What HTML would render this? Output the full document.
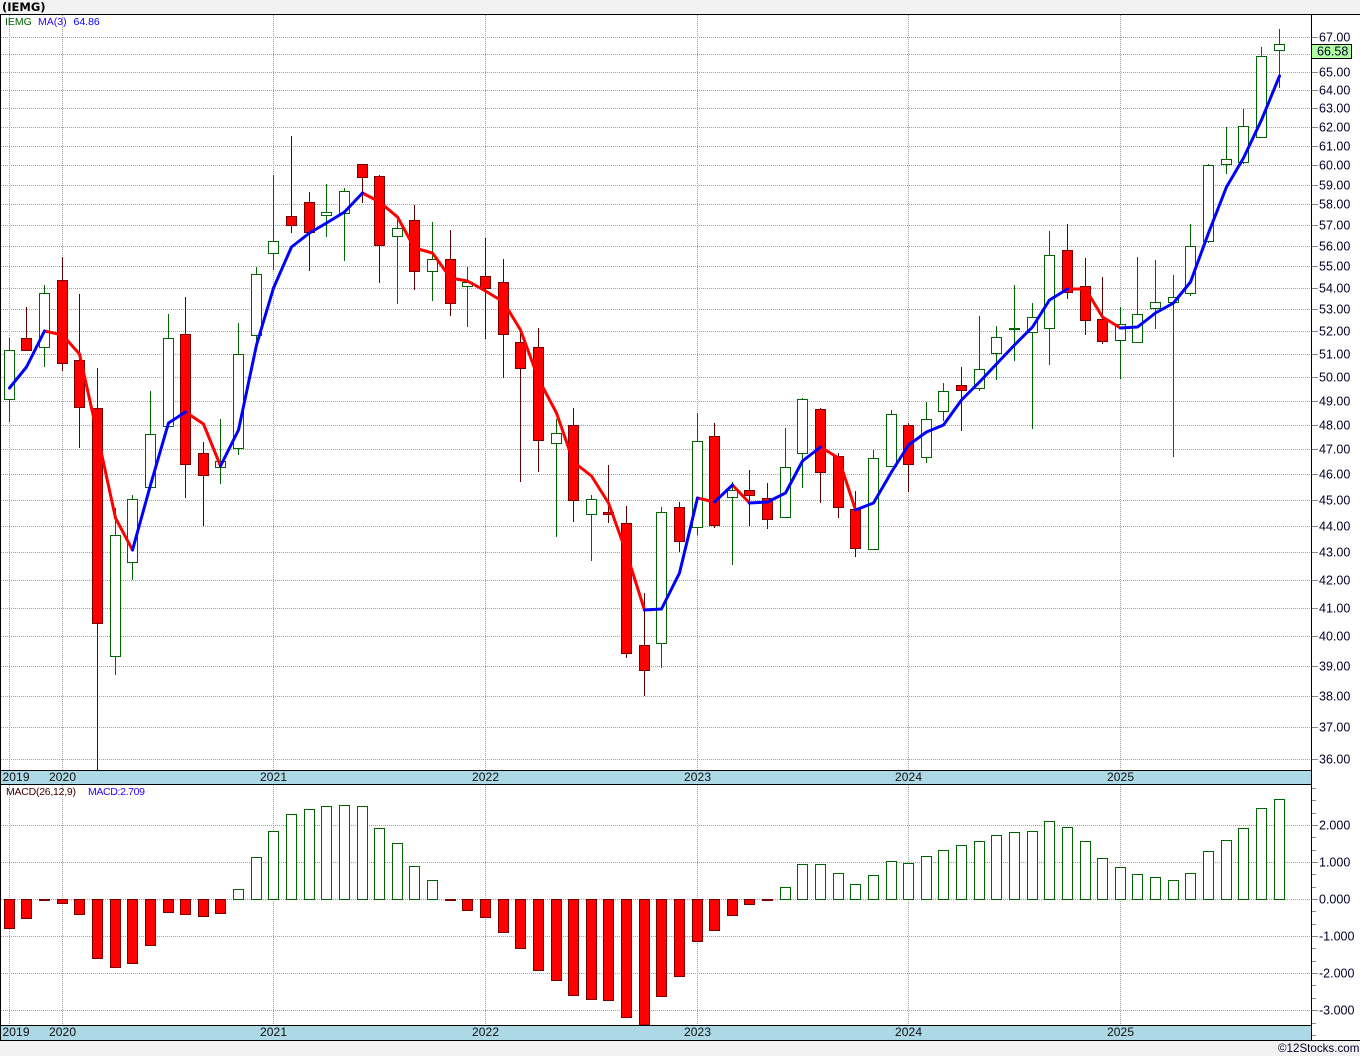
<!DOCTYPE html>
<html><head><meta charset="utf-8"><title>IEMG</title>
<style>html,body{margin:0;padding:0;background:#f2f2f2;width:1360px;height:1056px;overflow:hidden}svg{display:block}text{font-family:"Liberation Sans",sans-serif}</style></head>
<body>
<svg width="1360" height="1056" viewBox="0 0 1360 1056" xmlns="http://www.w3.org/2000/svg">
<rect width="1360" height="1056" fill="#f2f2f2"/>
<rect x="0" y="14" width="1360" height="1027" fill="#fff"/>
<text x="2" y="11" font-size="11.5" font-weight="bold" fill="#000" style="font-family:'DejaVu Sans',sans-serif">(IEMG)</text>
<g shape-rendering="crispEdges">
<path fill="none" stroke="#a0a0a0" stroke-dasharray="1 1" d="M9.5 15V770M62.5 15V770M273.5 15V770M485.5 15V770M697.5 15V770M908.5 15V770M1120.5 15V770M9.5 785V1025M62.5 785V1025M273.5 785V1025M485.5 785V1025M697.5 785V1025M908.5 785V1025M1120.5 785V1025"/>
<path fill="none" stroke="#a0a0a0" stroke-dasharray="1 1" d="M1 37.5H1311M1 54.5H1311M1 72.5H1311M1 90.5H1311M1 108.5H1311M1 127.5H1311M1 146.5H1311M1 165.5H1311M1 185.5H1311M1 204.5H1311M1 225.5H1311M1 246.5H1311M1 266.5H1311M1 288.5H1311M1 309.5H1311M1 331.5H1311M1 354.5H1311M1 377.5H1311M1 401.5H1311M1 425.5H1311M1 449.5H1311M1 474.5H1311M1 500.5H1311M1 526.5H1311M1 552.5H1311M1 580.5H1311M1 608.5H1311M1 636.5H1311M1 666.5H1311M1 696.5H1311M1 727.5H1311M1 759.5H1311M1 825.5H1311M1 862.5H1311M1 899.5H1311M1 936.5H1311M1 973.5H1311M1 1010.5H1311"/>
<path fill="none" stroke="#006400" d="M9.5 338V422M44.5 285V367M115.5 508V675M132.5 495V580M150.5 391V488M168.5 314V428M220.5 419V484M238.5 323V455M256.5 267V341M273.5 175V270M326.5 184V237M344.5 188V261M397.5 220V304M432.5 222V301M467.5 267V327M556.5 419V537M591.5 495V561M661.5 507V668M697.5 413V535M732.5 482V565M785.5 428V517M802.5 398V488M873.5 450V550M891.5 410V466M926.5 402V463M943.5 383V421M979.5 316V391M996.5 326V380M1014.5 285V361M1032.5 303V429M1049.5 231V365M1120.5 307V379M1137.5 257V342M1155.5 260V329M1173.5 275V457M1190.5 224V296M1208.5 164V243M1226.5 127V174M1243.5 109V164M1261.5 47V138M1279.5 29V88"/>
<path fill="none" stroke="#5a0000" d="M26.5 307V351M62.5 257V371M79.5 294V448M97.5 368V770M185.5 297V498M203.5 442V526M291.5 136V233M309.5 192V271M362.5 164V203M379.5 175V283M414.5 205V290M450.5 230V316M485.5 238V339M503.5 259V378M520.5 330V482M538.5 328V472M573.5 408V522M608.5 465V523M626.5 506V658M644.5 593V696M679.5 502V552M714.5 423V528M749.5 470V526M767.5 483V529M820.5 408V503M838.5 453V518M855.5 491V557M908.5 423V492M961.5 367V431M1067.5 224V299M1085.5 258V335M1102.5 277V344"/>
<path fill="#fff" stroke="#006400" d="M4.5 350.5h10V399.5h-10zM39.5 293.5h10V347.5h-10zM110.5 535.5h10V656.5h-10zM127.5 499.5h10V562.5h-10zM145.5 434.5h10V487.5h-10zM163.5 338.5h10V426.5h-10zM215.5 461.5h10V467.5h-10zM233.5 354.5h10V448.5h-10zM251.5 274.5h10V335.5h-10zM268.5 241.5h10V253.5h-10zM321.5 212.5h10V215.5h-10zM339.5 191.5h10V213.5h-10zM392.5 228.5h10V236.5h-10zM427.5 259.5h10V271.5h-10zM462.5 282.5h10V286.5h-10zM551.5 433.5h10V443.5h-10zM586.5 499.5h10V514.5h-10zM656.5 512.5h10V643.5h-10zM692.5 441.5h10V527.5h-10zM727.5 490.5h10V497.5h-10zM780.5 467.5h10V517.5h-10zM797.5 399.5h10V453.5h-10zM868.5 458.5h10V549.5h-10zM886.5 414.5h10V466.5h-10zM921.5 419.5h10V457.5h-10zM938.5 391.5h10V411.5h-10zM974.5 369.5h10V388.5h-10zM991.5 337.5h10V353.5h-10zM1009.5 328.5h10V329.5h-10zM1027.5 317.5h10V332.5h-10zM1044.5 255.5h10V328.5h-10zM1115.5 324.5h10V340.5h-10zM1132.5 314.5h10V342.5h-10zM1150.5 302.5h10V308.5h-10zM1168.5 297.5h10V302.5h-10zM1185.5 246.5h10V293.5h-10zM1203.5 165.5h10V241.5h-10zM1221.5 159.5h10V164.5h-10zM1238.5 126.5h10V162.5h-10zM1256.5 56.5h10V137.5h-10zM1274.5 44.5h10V50.5h-10z"/>
<path fill="#f00" stroke="#7a0000" d="M21.5 338.5h10V350.5h-10zM57.5 280.5h10V363.5h-10zM74.5 360.5h10V407.5h-10zM92.5 408.5h10V623.5h-10zM180.5 334.5h10V464.5h-10zM198.5 453.5h10V475.5h-10zM286.5 216.5h10V225.5h-10zM304.5 202.5h10V232.5h-10zM357.5 164.5h10V177.5h-10zM374.5 176.5h10V245.5h-10zM409.5 220.5h10V271.5h-10zM445.5 259.5h10V303.5h-10zM480.5 276.5h10V288.5h-10zM498.5 282.5h10V334.5h-10zM515.5 342.5h10V368.5h-10zM533.5 347.5h10V440.5h-10zM568.5 425.5h10V500.5h-10zM603.5 512.5h10V514.5h-10zM621.5 523.5h10V653.5h-10zM639.5 645.5h10V670.5h-10zM674.5 507.5h10V541.5h-10zM709.5 436.5h10V525.5h-10zM744.5 490.5h10V495.5h-10zM762.5 498.5h10V519.5h-10zM815.5 409.5h10V472.5h-10zM833.5 456.5h10V507.5h-10zM850.5 509.5h10V548.5h-10zM903.5 425.5h10V464.5h-10zM956.5 385.5h10V390.5h-10zM1062.5 250.5h10V292.5h-10zM1080.5 286.5h10V320.5h-10zM1097.5 319.5h10V341.5h-10z"/>
<path fill="#fff" stroke="#006400" d="M268.5 831.5h10V899.5h-10zM233.5 889.5h10V899.5h-10zM251.5 857.5h10V899.5h-10zM286.5 814.5h10V899.5h-10zM304.5 809.5h10V899.5h-10zM321.5 806.5h10V899.5h-10zM339.5 805.5h10V899.5h-10zM357.5 806.5h10V899.5h-10zM374.5 828.5h10V899.5h-10zM392.5 843.5h10V899.5h-10zM409.5 866.5h10V899.5h-10zM427.5 880.5h10V899.5h-10zM780.5 887.5h10V899.5h-10zM797.5 864.5h10V899.5h-10zM815.5 864.5h10V899.5h-10zM833.5 873.5h10V899.5h-10zM850.5 884.5h10V899.5h-10zM868.5 875.5h10V899.5h-10zM886.5 861.5h10V899.5h-10zM903.5 863.5h10V899.5h-10zM921.5 856.5h10V899.5h-10zM938.5 850.5h10V899.5h-10zM956.5 845.5h10V899.5h-10zM974.5 841.5h10V899.5h-10zM991.5 835.5h10V899.5h-10zM1009.5 832.5h10V899.5h-10zM1027.5 831.5h10V899.5h-10zM1044.5 821.5h10V899.5h-10zM1062.5 827.5h10V899.5h-10zM1080.5 841.5h10V899.5h-10zM1097.5 858.5h10V899.5h-10zM1115.5 867.5h10V899.5h-10zM1132.5 874.5h10V899.5h-10zM1150.5 877.5h10V899.5h-10zM1168.5 880.5h10V899.5h-10zM1185.5 873.5h10V899.5h-10zM1203.5 851.5h10V899.5h-10zM1221.5 840.5h10V899.5h-10zM1238.5 828.5h10V899.5h-10zM1256.5 808.5h10V899.5h-10zM1274.5 799.5h10V899.5h-10z"/>
<path fill="#f00" stroke="#7a0000" d="M4.5 899.5h10V928.5h-10zM21.5 899.5h10V918.5h-10zM39.5 899.5h10V900.5h-10zM57.5 899.5h10V903.5h-10zM74.5 899.5h10V914.5h-10zM92.5 899.5h10V958.5h-10zM110.5 899.5h10V967.5h-10zM127.5 899.5h10V963.5h-10zM145.5 899.5h10V945.5h-10zM163.5 899.5h10V912.5h-10zM180.5 899.5h10V914.5h-10zM198.5 899.5h10V916.5h-10zM215.5 899.5h10V913.5h-10zM445.5 899.5h10V900.5h-10zM462.5 899.5h10V910.5h-10zM480.5 899.5h10V917.5h-10zM498.5 899.5h10V932.5h-10zM515.5 899.5h10V948.5h-10zM533.5 899.5h10V970.5h-10zM551.5 899.5h10V980.5h-10zM568.5 899.5h10V995.5h-10zM586.5 899.5h10V999.5h-10zM603.5 899.5h10V1000.5h-10zM621.5 899.5h10V1017.5h-10zM639.5 899.5h10V1025h-10zM656.5 899.5h10V996.5h-10zM674.5 899.5h10V976.5h-10zM692.5 899.5h10V941.5h-10zM709.5 899.5h10V930.5h-10zM727.5 899.5h10V915.5h-10zM744.5 899.5h10V904.5h-10zM762.5 899.5h10V900.5h-10z"/>
</g>
<g fill="none" stroke-width="3" stroke-linejoin="round" stroke-linecap="round">
<path stroke="#f00" d="M44.5 331L62.5 335L79.5 354L97.5 435L115.5 518L132.5 550M185.5 412L203.5 424L220.5 466M362.5 193L379.5 202L397.5 217L414.5 248L432.5 253L450.5 278L467.5 281L485.5 291L503.5 302L520.5 330L538.5 379L556.5 413L573.5 462L591.5 476L608.5 503L626.5 553L644.5 610M697.5 498L714.5 502M732.5 485L749.5 503M820.5 447L838.5 458L855.5 510M1067.5 289L1085.5 289L1102.5 317L1120.5 328"/>
<path stroke="#00f" d="M9.5 388L26.5 367L44.5 331M132.5 550L150.5 485L168.5 423L185.5 412M220.5 466L238.5 430L256.5 345L273.5 288L291.5 247L309.5 233L326.5 223L344.5 212L362.5 193M644.5 610L661.5 609L679.5 573L697.5 498M714.5 502L732.5 485M749.5 503L767.5 502L785.5 493L802.5 461L820.5 447M855.5 510L873.5 503L891.5 472L908.5 445L926.5 432L943.5 425L961.5 400L979.5 382L996.5 364L1014.5 345L1032.5 327L1049.5 300L1067.5 289M1120.5 328L1137.5 327L1155.5 313L1173.5 303L1190.5 282L1208.5 233L1226.5 187L1243.5 158L1261.5 120L1279.5 76"/>
</g>
<g shape-rendering="crispEdges">
<rect x="1" y="771" width="1310" height="13" fill="#add8e6"/>
<rect x="1" y="1026" width="1310" height="14" fill="#add8e6"/>
<path fill="none" stroke="#000" d="M0 14.5H1360M0 770.5H1311M0 784.5H1311M0 1025.5H1311M0 1040.5H1360M1311.5 14V1040M0.5 14V1040"/>
<path fill="none" stroke="#888" d="M1312 37.5h6M1312 72.5h6M1312 90.5h6M1312 108.5h6M1312 127.5h6M1312 146.5h6M1312 165.5h6M1312 185.5h6M1312 204.5h6M1312 225.5h6M1312 246.5h6M1312 266.5h6M1312 288.5h6M1312 309.5h6M1312 331.5h6M1312 354.5h6M1312 377.5h6M1312 401.5h6M1312 425.5h6M1312 449.5h6M1312 474.5h6M1312 500.5h6M1312 526.5h6M1312 552.5h6M1312 580.5h6M1312 608.5h6M1312 636.5h6M1312 666.5h6M1312 696.5h6M1312 727.5h6M1312 759.5h6M1312 825.5h6M1312 862.5h6M1312 899.5h6M1312 936.5h6M1312 973.5h6M1312 1010.5h6M1312 788.5h4M1312 800.5h4M1312 813.5h4M1312 837.5h4M1312 850.5h4M1312 874.5h4M1312 887.5h4M1312 911.5h4M1312 924.5h4M1312 948.5h4M1312 961.5h4M1312 985.5h4M1312 998.5h4M1312 1023.5h4M1312 1035.5h4"/>
<rect x="1311.5" y="44.5" width="40" height="14" fill="#b0ffa0" stroke="#000"/>
</g>
<g font-size="12.5" fill="#000028">
<text x="1319" y="41.5">67.00</text><text x="1317" y="55.5">66.58</text><text x="1319" y="76.5">65.00</text><text x="1319" y="94.5">64.00</text><text x="1319" y="112.5">63.00</text><text x="1319" y="131.5">62.00</text><text x="1319" y="150.5">61.00</text><text x="1319" y="169.5">60.00</text><text x="1319" y="189.5">59.00</text><text x="1319" y="208.5">58.00</text><text x="1319" y="229.5">57.00</text><text x="1319" y="250.5">56.00</text><text x="1319" y="270.5">55.00</text><text x="1319" y="292.5">54.00</text><text x="1319" y="313.5">53.00</text><text x="1319" y="335.5">52.00</text><text x="1319" y="358.5">51.00</text><text x="1319" y="381.5">50.00</text><text x="1319" y="405.5">49.00</text><text x="1319" y="429.5">48.00</text><text x="1319" y="453.5">47.00</text><text x="1319" y="478.5">46.00</text><text x="1319" y="504.5">45.00</text><text x="1319" y="530.5">44.00</text><text x="1319" y="556.5">43.00</text><text x="1319" y="584.5">42.00</text><text x="1319" y="612.5">41.00</text><text x="1319" y="640.5">40.00</text><text x="1319" y="670.5">39.00</text><text x="1319" y="700.5">38.00</text><text x="1319" y="731.5">37.00</text><text x="1319" y="763.5">36.00</text>
<text x="1319" y="829.5">2.000</text><text x="1319" y="866.5">1.000</text><text x="1319" y="903.5">0.000</text><text x="1319" y="940.5">-1.000</text><text x="1319" y="977.5">-2.000</text><text x="1319" y="1014.5">-3.000</text>
</g>
<g font-size="12" fill="#101010" letter-spacing=".1">
<text x="2.5" y="781">2019</text><text x="49" y="781">2020</text><text x="260" y="781">2021</text><text x="472" y="781">2022</text><text x="684" y="781">2023</text><text x="895" y="781">2024</text><text x="1107" y="781">2025</text>
<text x="2.5" y="1036">2019</text><text x="49" y="1036">2020</text><text x="260" y="1036">2021</text><text x="472" y="1036">2022</text><text x="684" y="1036">2023</text><text x="895" y="1036">2024</text><text x="1107" y="1036">2025</text>
</g>
<g font-size="10.5">
<text x="5" y="25" fill="#006400">IEMG</text><text x="38" y="25" fill="#2a00ff">MA(3)</text><text x="73.5" y="25" fill="#0000ff">64.86</text>
<text x="6" y="795" fill="#3c0000" textLength="70">MACD(26,12,9)</text><text x="88" y="795" fill="#2a00ff" textLength="57">MACD:2.709</text>
</g>
<text x="1278" y="1052" font-size="11.6" fill="#000028">©12Stocks.com</text>
</svg>
</body></html>
